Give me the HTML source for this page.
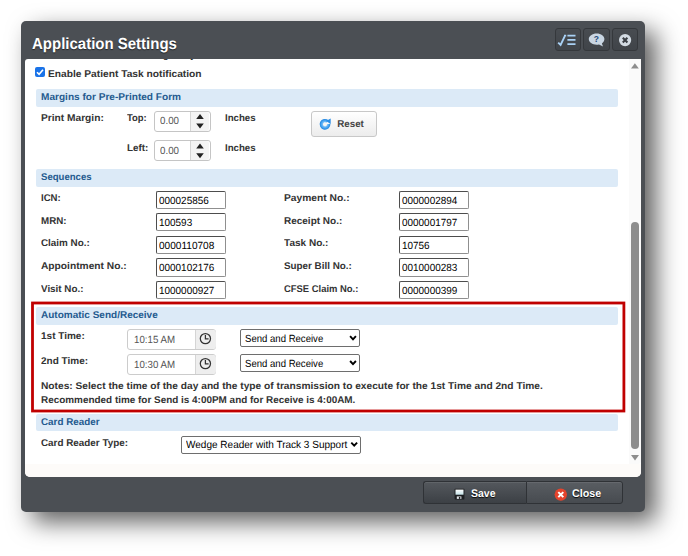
<!DOCTYPE html>
<html lang="en">
<head>
<meta charset="utf-8">
<title>Application Settings</title>
<style>
html,body{margin:0;padding:0;}
body{width:688px;height:556px;background:#fff;overflow:hidden;position:relative;font-family:"Liberation Sans",sans-serif;}
.abs,.t{position:absolute;}
.t{text-rendering:geometricPrecision;white-space:nowrap;transform-origin:0 0;line-height:16px;height:16px;color:#333;}
.b{font-weight:bold;}
.r{font-weight:normal;}
.h{color:#245a8f;}
.g{color:#555;}
.k{color:#000;}
#dlg{left:21px;top:21px;width:624px;height:491px;background:#4b4f54;border-radius:5px;box-shadow:11px 10px 24px rgba(0,0,0,.63);}
#content{left:24.5px;top:58.5px;width:616.5px;height:418px;background:#fff;border-radius:3px 0 5px 5px;overflow:hidden;}
#track{left:629px;top:58.5px;width:12px;height:405.5px;background:#fafafa;border-radius:0 0 3px 0;}
#thumb{left:631px;top:222px;width:7.5px;height:227px;background:#8d8d8d;border-radius:4px;}
.bar{left:35.5px;width:582.5px;height:17.5px;background:#dceaf7;border-radius:2px;}
.inp{width:68px;height:16.4px;border:1px solid #555;border-color:#4d4d4d #8f8f8f #8f8f8f #4d4d4d;border-radius:2px;background:#fff;box-shadow:inset 0 0 0 0 #000;}
.spin{left:154px;width:54.5px;height:19px;border:1px solid #c5c5c5;border-radius:3px;background:#fff;}
.spin i{position:absolute;left:34.8px;top:0;width:18.7px;height:19px;background:#f4f4f4;border-left:1px solid #d5d5d5;border-radius:0 3px 3px 0;}
.time{left:127px;width:86.6px;height:19px;border:1px solid #ccc;border-radius:3px;background:#fff;}
.time i{position:absolute;left:66.8px;top:0;width:19.8px;height:19px;background:#eee;border-left:1px solid #d5d5d5;border-radius:0 3px 3px 0;}
.sel{border:1px solid #6e6e6e;border-radius:2px;background:#fff;height:16px;}
.tb{top:28px;width:24.5px;height:20.5px;border:1px solid #35383c;border-radius:3px;background:linear-gradient(#484c51,#404449);}
.fb{top:481px;height:21px;border:1px solid #2f3236;background:linear-gradient(#54585d,#3c4045);box-shadow:inset 0 1px 0 rgba(255,255,255,.08);}
svg{position:absolute;overflow:visible;}
</style>
</head>
<body>
<div class="abs" id="dlg"></div>
<div class="abs" id="content"></div>
<div class="abs" id="track"></div>
<div class="abs" style="left:24.5px;top:464px;width:616.5px;height:12.5px;background:#fdfbf9;border-radius:0 0 5px 5px;"></div>
<div class="abs" id="thumb"></div>
<svg style="left:0;top:0" width="688" height="556" viewBox="0 0 688 556">
  <path d="M631 68.6 L638.8 68.6 L634.9 63.2 Z" fill="#8d8d8d"/>
  <path d="M631 455 L639 455 L635 460.4 Z" fill="#8d8d8d"/>
</svg>

<!-- section bars -->
<div class="abs bar" style="top:89px"></div>
<div class="abs bar" style="top:169px"></div>
<div class="abs bar" style="top:307px"></div>
<div class="abs bar" style="top:414px;height:17px"></div>

<!-- checkbox -->
<div class="abs" style="left:35px;top:67px;width:10px;height:10px;background:#1a73e8;border-radius:2px;"></div>
<svg style="left:35px;top:67px" width="10" height="10" viewBox="0 0 10 10"><path d="M2 5.2 L4.1 7.3 L8 2.8" fill="none" stroke="#fff" stroke-width="1.6"/></svg>

<!-- spinners -->
<div class="abs spin" style="top:111px"><i></i></div>
<div class="abs spin" style="top:140px"><i></i></div>
<svg style="left:0;top:0" width="688" height="556" viewBox="0 0 688 556">
  <path d="M196.2 118.9 L203.8 118.9 L200 113.9 Z M196.2 123.6 L203.8 123.6 L200 128.6 Z" fill="#222"/>
  <path d="M196.2 148.4 L203.8 148.4 L200 143.4 Z M196.2 153.2 L203.8 153.2 L200 158.2 Z" fill="#222"/>
</svg>

<!-- reset button -->
<div class="abs" style="left:311px;top:110.5px;width:63.7px;height:24.1px;border:1px solid #c8c8c8;border-radius:3px;background:linear-gradient(#fff,#ececec);"></div>
<svg style="left:319px;top:118px" width="13" height="13" viewBox="0 0 13 13">
  <defs><radialGradient id="rg" cx="6" cy="6.3" r="5.6" gradientUnits="userSpaceOnUse"><stop offset="0.3" stop-color="#8ccbfa"/><stop offset="0.75" stop-color="#3a9bee"/><stop offset="1" stop-color="#1f82dc"/></radialGradient></defs>
  <path d="M8.38 3.47 A3.7 3.7 0 1 0 9.69 5.98" fill="none" stroke="url(#rg)" stroke-width="3.4"/>
  <path d="M7 2.9 L11.7 0.6 L11.7 5.9 Z" fill="#2a8de6"/>
</svg>

<!-- sequence inputs -->
<div class="abs inp" style="left:156px;top:190.5px"></div>
<div class="abs inp" style="left:156px;top:213.1px"></div>
<div class="abs inp" style="left:156px;top:235.8px"></div>
<div class="abs inp" style="left:156px;top:258.4px"></div>
<div class="abs inp" style="left:156px;top:281px"></div>
<div class="abs inp" style="left:399.3px;width:67.3px;top:190.5px"></div>
<div class="abs inp" style="left:399.3px;width:67.3px;top:213.1px"></div>
<div class="abs inp" style="left:399.3px;width:67.3px;top:235.8px"></div>
<div class="abs inp" style="left:399.3px;width:67.3px;top:258.4px"></div>
<div class="abs inp" style="left:399.3px;width:67.3px;top:281px"></div>

<!-- red highlight -->
<svg style="left:0;top:0" width="688" height="556" viewBox="0 0 688 556"><rect x="32.5" y="303" width="591.4" height="108" fill="none" stroke="#c00000" stroke-width="2.8"/></svg>

<!-- time pickers -->
<div class="abs time" style="top:329px"><i></i></div>
<div class="abs time" style="top:354px"><i></i></div>
<svg style="left:0;top:0" width="688" height="556" viewBox="0 0 688 556">
  <g fill="none" stroke="#333" stroke-width="1.25">
    <circle cx="205.4" cy="338.6" r="5.1"/><path d="M205.4 335 V338.8 H208.6"/>
    <circle cx="205.4" cy="363.6" r="5.1"/><path d="M205.4 360 V363.8 H208.6"/>
  </g>
</svg>

<!-- selects -->
<div class="abs sel" style="left:240px;top:329.3px;width:118px"></div>
<div class="abs sel" style="left:240px;top:354px;width:118px;height:16.3px"></div>
<div class="abs sel" style="left:181px;top:435.7px;width:178.2px;height:16px"></div>
<svg style="left:0;top:0" width="688" height="556" viewBox="0 0 688 556">
  <g fill="none" stroke="#000" stroke-width="1.9">
    <path d="M350.1 336.2 L353 339.3 L355.9 336.2"/>
    <path d="M350.1 361 L353 364.1 L355.9 361"/>
    <path d="M351.3 442.6 L354.2 445.7 L357.1 442.6"/>
  </g>
</svg>

<!-- title buttons -->
<div class="abs tb" style="left:554.5px"></div>
<div class="abs tb" style="left:583px"></div>
<div class="abs tb" style="left:611.7px"></div>
<svg style="left:0;top:0" width="688" height="556" viewBox="0 0 688 556">
  <g stroke="#a9d1f5" fill="none">
    <path d="M558.2 42.6 L560.6 45 L564.8 36.2" stroke-width="1.9"/>
    <path d="M564 35.6 H566.2 M567.4 35.6 H575.5 M567.4 39.9 H575.5 M567.4 44.1 H575.5" stroke-width="1.8"/>
  </g>
  <path d="M596.6 33.4 C601.2 33.4 604.4 36 604.4 39.1 C604.4 40.8 603.4 42.4 601.9 43.4 L603 46.4 L599 44.5 C598.2 44.7 597.4 44.8 596.6 44.8 C592.3 44.8 588.8 42.2 588.8 39.1 C588.8 36 592.3 33.4 596.6 33.4 Z" fill="#c9d6e3"/>
  <text x="596.4" y="42" font-family="Liberation Sans, sans-serif" font-weight="bold" font-size="8.5" fill="#1f4a7a" text-anchor="middle">?</text>
  <circle cx="625.1" cy="40.1" r="6.1" fill="#d3dbe3"/>
  <path d="M622.8 37.8 L627.4 42.4 M627.4 37.8 L622.8 42.4" stroke="#3a3e44" stroke-width="2.1"/>
</svg>

<!-- footer buttons -->
<div class="abs fb" style="left:422.8px;width:102px;border-right:none;border-radius:3px 0 0 3px;"></div>
<div class="abs fb" style="left:525.8px;width:95.1px;border-radius:0 3px 3px 0;background:linear-gradient(#595d62,#474b50);"></div>
<svg style="left:0;top:0" width="688" height="556" viewBox="0 0 688 556">
  <defs><linearGradient id="sv" x1="0" y1="0" x2="0" y2="1"><stop offset="0" stop-color="#ffffff"/><stop offset="1" stop-color="#c4e2e8"/></linearGradient></defs>
  <rect x="454.6" y="488.8" width="9.8" height="10.6" rx="0.6" fill="#1d1f22"/>
  <rect x="455.5" y="489.6" width="8" height="5.1" fill="url(#sv)"/>
  <rect x="456.8" y="496.4" width="4.6" height="2.5" fill="#dfe3e7"/>
  <rect x="458.9" y="496.9" width="1.4" height="2" fill="#1d1f22"/>
  <circle cx="560.8" cy="494.6" r="6.2" fill="#e5432c"/>
  <path d="M558.3 492.1 L563.3 497.1 M563.3 492.1 L558.3 497.1" stroke="#fff" stroke-width="2"/>
</svg>

<!-- clipped line of previous option -->
<div class="abs" style="left:24.5px;top:58.5px;width:600px;height:8px;overflow:hidden;">
  <span class="b" style="position:absolute;right:462px;top:-11.29px;font-size:9.2px;line-height:16px;white-space:nowrap;color:#333;letter-spacing:.4px;">Run Electronic Billin</span><span class="b" style="position:absolute;left:138.4px;top:-11.29px;font-size:9.2px;line-height:16px;white-space:nowrap;color:#333;letter-spacing:.4px;">g Daily</span>
</div>

<span class="t b" style="left:32.00px;top:37.46px;font-size:16px;transform:scaleX(0.937);color:#fff;text-shadow:0 1px 1px rgba(0,0,0,.55);">Application Settings</span>
<span class="t b" style="left:47.60px;top:66.80px;font-size:9.8px;transform:scaleX(1.042);">Enable Patient Task notification</span>
<span class="t b h" style="left:41.20px;top:89.60px;font-size:9.8px;transform:scaleX(1.029);">Margins for Pre-Printed Form</span>
<span class="t b" style="left:40.90px;top:110.60px;font-size:9.8px;transform:scaleX(1.039);">Print Margin:</span>
<span class="t b" style="left:127.00px;top:110.60px;font-size:9.8px;transform:scaleX(0.961);">Top:</span>
<span class="t b" style="left:127.00px;top:141.30px;font-size:9.8px;transform:scaleX(1.008);">Left:</span>
<span class="t b" style="left:225.00px;top:110.60px;font-size:9.8px;transform:scaleX(0.986);">Inches</span>
<span class="t b" style="left:225.00px;top:141.30px;font-size:9.8px;transform:scaleX(0.986);">Inches</span>
<span class="t r g" style="left:160.20px;top:113.60px;font-size:10.4px;transform:scaleX(0.939);">0.00</span>
<span class="t r g" style="left:160.20px;top:143.70px;font-size:10.4px;transform:scaleX(0.939);">0.00</span>
<span class="t b" style="left:337.20px;top:116.60px;font-size:9.8px;color:#444;">Reset</span>
<span class="t b h" style="left:40.80px;top:169.60px;font-size:9.8px;transform:scaleX(0.978);">Sequences</span>
<span class="t b" style="left:41.30px;top:190.90px;font-size:9.8px;transform:scaleX(0.978);">ICN:</span>
<span class="t b" style="left:41.30px;top:213.60px;font-size:9.8px;transform:scaleX(0.997);">MRN:</span>
<span class="t b" style="left:41.30px;top:236.00px;font-size:9.8px;transform:scaleX(1.007);">Claim No.:</span>
<span class="t b" style="left:41.30px;top:259.40px;font-size:9.8px;transform:scaleX(1.042);">Appointment No.:</span>
<span class="t b" style="left:41.30px;top:282.10px;font-size:9.8px;transform:scaleX(1.003);">Visit No.:</span>
<span class="t b" style="left:283.75px;top:190.90px;font-size:9.8px;transform:scaleX(1.047);">Payment No.:</span>
<span class="t b" style="left:283.75px;top:213.60px;font-size:9.8px;transform:scaleX(1.019);">Receipt No.:</span>
<span class="t b" style="left:283.75px;top:236.00px;font-size:9.8px;transform:scaleX(1.025);">Task No.:</span>
<span class="t b" style="left:283.75px;top:259.40px;font-size:9.8px;transform:scaleX(1.004);">Super Bill No.:</span>
<span class="t b" style="left:283.75px;top:282.10px;font-size:9.8px;transform:scaleX(0.961);">CFSE Claim No.:</span>
<span class="t b h" style="left:41.00px;top:307.60px;font-size:9.8px;transform:scaleX(1.021);">Automatic Send/Receive</span>
<span class="t b" style="left:41.00px;top:328.90px;font-size:9.8px;transform:scaleX(1.022);">1st Time:</span>
<span class="t b" style="left:41.00px;top:353.60px;font-size:9.8px;transform:scaleX(1.020);">2nd Time:</span>
<span class="t r g" style="left:133.70px;top:333.40px;font-size:10.4px;transform:scaleX(0.934);">10:15 AM</span>
<span class="t r g" style="left:133.70px;top:358.40px;font-size:10.4px;transform:scaleX(0.934);">10:30 AM</span>
<span class="t r k" style="left:244.60px;top:332.40px;font-size:10.4px;transform:scaleX(0.921);">Send and Receive</span>
<span class="t r k" style="left:244.60px;top:357.40px;font-size:10.4px;transform:scaleX(0.921);">Send and Receive</span>
<span class="t b" style="left:41.00px;top:378.80px;font-size:9.8px;transform:scaleX(1.040);">Notes: Select the time of the day and the type of transmission to execute for the 1st Time and 2nd Time.</span>
<span class="t b" style="left:41.00px;top:393.20px;font-size:9.8px;transform:scaleX(1.013);">Recommended time for Send is 4:00PM and for Receive is 4:00AM.</span>
<span class="t b h" style="left:41.30px;top:414.60px;font-size:9.8px;transform:scaleX(1.004);">Card Reader</span>
<span class="t b" style="left:41.30px;top:436.30px;font-size:9.8px;transform:scaleX(1.007);">Card Reader Type:</span>
<span class="t r k" style="left:185.70px;top:437.60px;font-size:10.4px;transform:scaleX(0.964);">Wedge Reader with Track 3 Support</span>
<span class="t b" style="left:470.80px;top:485.89px;font-size:11px;transform:scaleX(0.953);color:#fff;text-shadow:0 1px 1px rgba(0,0,0,.9);">Save</span>
<span class="t b" style="left:571.50px;top:485.89px;font-size:11px;transform:scaleX(0.971);color:#fff;text-shadow:0 1px 1px rgba(0,0,0,.9);">Close</span>
<span class="t r k" style="left:158.50px;top:194.40px;font-size:10.4px;transform:scaleX(0.957);">000025856</span>
<span class="t r k" style="left:158.50px;top:216.40px;font-size:10.4px;transform:scaleX(0.957);">100593</span>
<span class="t r k" style="left:158.50px;top:239.10px;font-size:10.4px;transform:scaleX(0.970);">0000110708</span>
<span class="t r k" style="left:158.50px;top:261.40px;font-size:10.4px;transform:scaleX(0.957);">0000102176</span>
<span class="t r k" style="left:158.50px;top:284.20px;font-size:10.4px;transform:scaleX(0.957);">1000000927</span>
<span class="t r k" style="left:402.00px;top:194.40px;font-size:10.4px;transform:scaleX(0.957);">0000002894</span>
<span class="t r k" style="left:402.00px;top:216.40px;font-size:10.4px;transform:scaleX(0.957);">0000001797</span>
<span class="t r k" style="left:402.00px;top:239.10px;font-size:10.4px;transform:scaleX(0.957);">10756</span>
<span class="t r k" style="left:402.00px;top:261.40px;font-size:10.4px;transform:scaleX(0.957);">0010000283</span>
<span class="t r k" style="left:402.00px;top:284.20px;font-size:10.4px;transform:scaleX(0.957);">0000000399</span>
</body>
</html>
